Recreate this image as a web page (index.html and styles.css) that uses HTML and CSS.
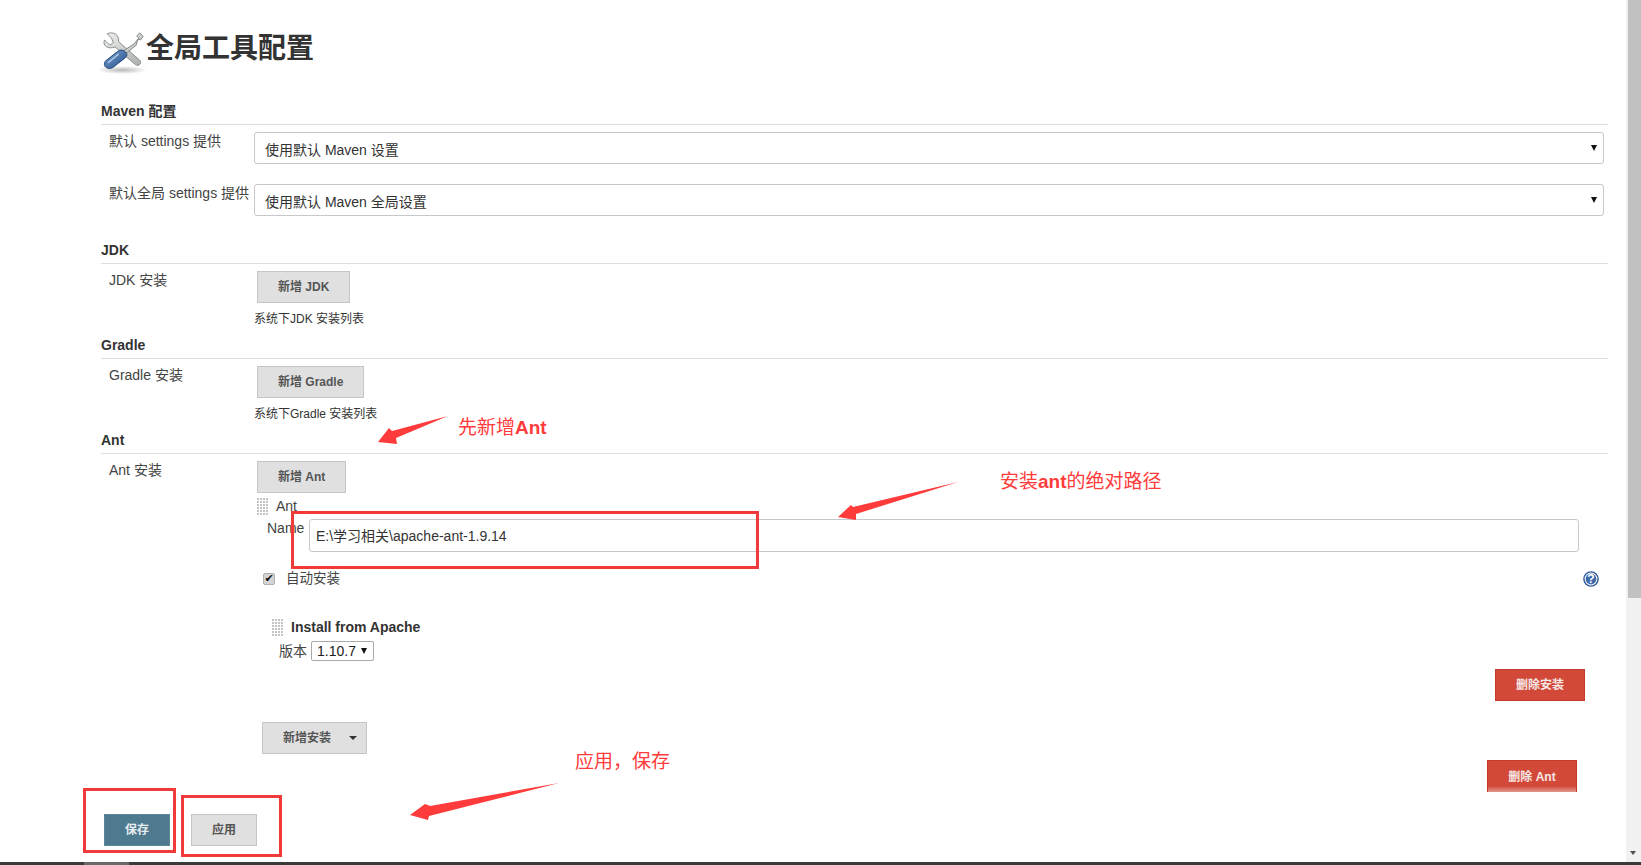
FILE: index.html
```html
<!DOCTYPE html>
<html lang="zh-CN">
<head>
<meta charset="utf-8">
<title>全局工具配置</title>
<link rel="stylesheet" href="styles.css">
</head>
<body>
<div class="page">
  <main class="main">
    <div class="title-row">
      <svg class="title-icon" viewBox="0 0 50 44" width="50" height="44" aria-hidden="true">
        <defs>
          <linearGradient id="steel" x1="0" y1="0" x2="1" y2="1"><stop offset="0" stop-color="#f2f3f1"/><stop offset="1" stop-color="#a9adab"/></linearGradient>
          <linearGradient id="blue" x1="0" y1="0" x2="1" y2="1"><stop offset="0" stop-color="#7ea6d3"/><stop offset="1" stop-color="#204a87"/></linearGradient>
          <radialGradient id="shadow"><stop offset="0" stop-color="#999" stop-opacity=".7"/><stop offset="1" stop-color="#999" stop-opacity="0"/></radialGradient>
        </defs>
        <ellipse cx="25" cy="40" rx="25" ry="4" fill="url(#shadow)"/>
        <g transform="translate(4 2) scale(.88)">
          <path d="M4 9 L10 15 L14 12 L12 7 L7 2 C14 -1 21 3 20 11 L44 32 C47 35 43 40 39 37 L16 17 C9 20 1 16 4 9 Z" fill="url(#steel)" stroke="#7d8280" stroke-width="1"/>
          <path d="M38 13 L43 7 L40.5 4.5 L44 1 L48 5 L45 9 L42 8 L40 15 L25 27 L22 24 Z" fill="#c9cdcb" stroke="#787d7b" stroke-width="1"/>
          <path d="M27 22 C30 24 30 27 28 29 L14 40 C8 44 1 39 5 33 L19 22 C21 20 25 20 27 22 Z" fill="url(#blue)" stroke="#1d3f72" stroke-width="1"/>
          <path d="M8 35 L20 25" stroke="#b8d0ec" stroke-width="1.6" fill="none"/>
        </g>
      </svg>
      <h1 class="title">全局工具配置</h1>
    </div>

    <section class="section section-maven">
      <h2 class="section-head">Maven 配置</h2>
      <div class="form-row">
        <label class="form-label">默认 settings 提供</label>
        <div class="form-control">
          <div class="select-wrap"><select class="select"><option>使用默认 Maven 设置</option></select></div>
        </div>
      </div>
      <div class="form-row">
        <label class="form-label">默认全局 settings 提供</label>
        <div class="form-control">
          <div class="select-wrap"><select class="select"><option>使用默认 Maven 全局设置</option></select></div>
        </div>
      </div>
    </section>

    <section class="section">
      <h2 class="section-head">JDK</h2>
      <div class="form-row">
        <label class="form-label">JDK 安装</label>
        <div class="form-control">
          <button class="btn btn-indent" type="button">新增 JDK</button>
          <div class="help-text">系统下JDK 安装列表</div>
        </div>
      </div>
    </section>

    <section class="section">
      <h2 class="section-head">Gradle</h2>
      <div class="form-row">
        <label class="form-label">Gradle 安装</label>
        <div class="form-control">
          <button class="btn btn-indent" type="button">新增 Gradle</button>
          <div class="help-text">系统下Gradle 安装列表</div>
        </div>
      </div>
    </section>

    <section class="section">
      <h2 class="section-head">Ant</h2>
      <div class="form-row">
        <label class="form-label">Ant 安装</label>
        <div class="form-control ant-control">
          <button class="btn btn-indent" type="button">新增 Ant</button>
          <div class="chunk-head"><span class="handle"></span><span>Ant</span></div>
          <div class="name-row">
            <label class="name-label">Name</label>
            <input class="text-input" type="text" value="E:\学习相关\apache-ant-1.9.14">
          </div>
          <div class="auto-row">
            <span class="check"><span class="check-mark">✔</span></span>
            <span class="auto-label">自动安装</span>
            <svg class="help-icon" viewBox="0 0 16 16" width="16" height="16" aria-hidden="true">
              <circle cx="8" cy="8" r="7.8" fill="#2f5a9a"/>
              <circle cx="8" cy="8" r="6.4" fill="#fff"/>
              <circle cx="8" cy="8" r="5.4" fill="#3d69a8"/>
              <text class="help-mark" x="8" y="12.4" text-anchor="middle">?</text>
            </svg>
          </div>
          <div class="install-head"><span class="handle"></span><strong>Install from Apache</strong></div>
          <div class="version-row">
            <span>版本</span>
            <div class="mini-wrap"><select class="mini-select"><option>1.10.7</option></select></div>
          </div>
          <button class="btn btn-danger btn-del-install" type="button">删除安装</button>
          <button class="btn btn-add-install" type="button">新增安装<span class="caret"></span></button>
          <button class="btn btn-danger btn-del-ant" type="button">删除 Ant</button>
        </div>
      </div>
    </section>

    <div class="save-bar">
      <button class="btn btn-primary" type="button">保存</button>
      <button class="btn" type="button">应用</button>
    </div>
  </main>

  <div class="scrollbar">
    <div class="scroll-thumb"></div>
    <div class="scroll-arrow"></div>
  </div>
  <div class="taskbar"><div class="task-item"></div></div>

  <svg class="arrows" viewBox="0 0 1641 865" width="1641" height="865" aria-hidden="true">
    <polygon points="448,416 392,431 389,428 378,442 397,444 396,438"/>
    <polygon points="958,482 853,507 851,505 838,517 856,520 856,514"/>
    <polygon points="559,783 430,806 425,804 410,815 428,820 429,816"/>
  </svg>
  <div class="note note-add">先新增<b>Ant</b></div>
  <div class="note note-path">安装<b>ant</b>的绝对路径</div>
  <div class="note note-apply">应用，保存</div>
  <div class="red-box box-name"></div>
  <div class="red-box box-save"></div>
  <div class="red-box box-apply"></div>
</div>
</body>
</html>
```
FILE: styles.css
```css
* { box-sizing: border-box; }

html, body {
  margin: 0;
  height: 100%;
  overflow: hidden;
  background: #fff;
}

body {
  font-family: "Liberation Sans", "Noto Sans CJK SC", sans-serif;
  font-size: 14px;
  line-height: 16px;
  color: #333;
}

.page {
  position: relative;
  display: grid;
  grid-template-columns: 1fr 15px;
  grid-template-rows: 1fr 3px;
  width: 1641px;
  height: 865px;
  overflow: hidden;
}

.main {
  padding: 28px 18px 0 101px;
  overflow: hidden;
}

/* Title */
.title-row {
  display: flex;
  height: 40px;
  margin-bottom: 35px;
  margin-left: -4px;
}

.title-icon {
  flex: none;
  margin-top: 2px;
  overflow: visible;
}

.title {
  margin: 1px 0 0 -1px;
  font-size: 28px;
  line-height: 40px;
  font-weight: 700;
  color: #333;
}

/* Sections */
.section { margin-top: 11px; }
.section:first-of-type { margin-top: 0; }
.section-maven { padding-bottom: 15px; }

.section-head {
  margin: 0;
  padding-bottom: 5px;
  font-size: 14px;
  line-height: 16px;
  font-weight: 700;
  color: #333;
  border-bottom: 1px solid #e0e0e0;
}

.form-row {
  display: grid;
  grid-template-columns: 153px 1fr;
  padding-top: 7px;
}

.form-row + .form-row { padding-top: 20px; }

.form-label {
  padding-left: 8px;
  margin-top: 1px;
  white-space: nowrap;
  color: #444;
}

.form-control {
  display: flex;
  flex-direction: column;
  align-items: flex-start;
  min-width: 0;
}

/* Selects */
.select-wrap {
  position: relative;
  width: calc(100% - 4px);
}

.select-wrap::after,
.mini-wrap::after {
  content: "";
  position: absolute;
  border-left: 3px solid transparent;
  border-right: 3px solid transparent;
  border-top: 6px solid #111;
  pointer-events: none;
}

.select-wrap::after { right: 7px; top: 13px; }
.mini-wrap::after { right: 7px; top: 7px; }

.select {
  display: block;
  width: 100%;
  height: 32px;
  padding: 3px 10px 0;
  appearance: none;
  background: #fff;
  border: 1px solid #c8c8c8;
  border-radius: 3px;
  font: 14px/26px "Liberation Sans", "Noto Sans CJK SC", sans-serif;
  color: #333;
}

.mini-wrap {
  position: relative;
  width: 63px;
}

.mini-select {
  display: block;
  width: 100%;
  height: 20px;
  padding: 0 0 0 5px;
  appearance: none;
  background: #fff;
  border: 1px solid #a9a9a9;
  border-radius: 2px;
  font: 14px/18px "Liberation Sans", "Noto Sans CJK SC", sans-serif;
  color: #222;
}

/* Buttons */
.btn {
  flex: none;
  height: 32px;
  padding: 0 20px;
  background: #e0e0e0;
  border: 1px solid #c6c6c6;
  border-radius: 0;
  font: 700 12px/30px "Liberation Sans", "Noto Sans CJK SC", sans-serif;
  color: #555;
  white-space: nowrap;
}

.btn-indent { margin-left: 3px; }

.btn-danger {
  background: #d24939;
  border-color: #c43d2d;
  color: #f6e8e6;
}

.btn-primary {
  background: #4d7a8f;
  border-color: #5d8799;
  color: #e6edf0;
}

.help-text {
  margin: 8px 0 -1px;
  font-size: 12px;
  line-height: 16px;
  color: #333;
}

/* Ant block */
.chunk-head {
  display: flex;
  gap: 8px;
  margin: 5px 0 0 3px;
  line-height: 17px;
  color: #444;
}

.handle {
  flex: none;
  display: block;
  width: 11px;
  height: 17px;
  background-image: radial-gradient(circle at 1px 1px, #c4c4c4 1px, transparent 1.2px);
  background-size: 3px 3px;
}

.name-row {
  display: flex;
  align-self: stretch;
  margin: 4px 29px 0 13px;
  color: #444;
}

.name-label {
  flex: none;
  width: 42px;
  margin-top: 1px;
}

.text-input {
  flex: 1;
  min-width: 0;
  height: 33px;
  padding: 0 6px 2px;
  background: #fff;
  border: 1px solid #c8c8c8;
  border-radius: 3px;
  font: 14px/29px "Liberation Sans", "Noto Sans CJK SC", sans-serif;
  color: #333;
}

.auto-row {
  display: flex;
  align-items: center;
  align-self: stretch;
  height: 16px;
  margin: 19px 9px 0 9px;
}

.check {
  flex: none;
  display: flex;
  align-items: center;
  justify-content: center;
  width: 12px;
  height: 12px;
  background: #d4d4d4;
  border: 1px solid #b0b0b0;
  border-radius: 2px;
}

.check-mark {
  font: 11px/10px "DejaVu Sans", sans-serif;
  color: #111;
}

.auto-label {
  margin-left: 11px;
  font-size: 13.5px;
  color: #444;
}

.help-icon { margin-left: auto; flex: none; }

.help-mark {
  font: 700 12px "Liberation Sans", sans-serif;
  fill: #fff;
}

.install-head {
  display: flex;
  gap: 8px;
  margin: 32px 0 0 18px;
  line-height: 17px;
}

.version-row {
  display: flex;
  align-items: center;
  gap: 4px;
  margin: 5px 0 0 25px;
  color: #444;
}

.btn-del-install {
  align-self: flex-end;
  width: 90px;
  padding: 0;
  margin: 8px 23px 0 0;
}

.btn-add-install {
  display: flex;
  align-items: center;
  justify-content: space-between;
  width: 105px;
  padding: 0 9px 0 20px;
  margin: 21px 0 0 8px;
}

.caret {
  width: 0;
  height: 0;
  border-left: 4px solid transparent;
  border-right: 4px solid transparent;
  border-top: 4px solid #333;
}

.btn-del-ant {
  align-self: flex-end;
  width: 90px;
  padding: 0;
  margin: 6px 31px 0 0;
  background: linear-gradient(#d24939 0, #d24939 25px, #e5a49b 32px);
  border-bottom: 0;
}

.save-bar {
  display: flex;
  gap: 21px;
  margin: 22px 0 0 3px;
}

/* Scrollbar and strip */
.scrollbar {
  position: relative;
  background: #f1f1f1;
}

.scroll-thumb {
  height: 598px;
  margin-left: 2px;
  background: #c1c1c1;
}

.scroll-arrow {
  position: absolute;
  right: 5px;
  bottom: 7px;
  border-left: 3.5px solid transparent;
  border-right: 3.5px solid transparent;
  border-top: 4px solid #505050;
}

.taskbar {
  grid-column: 1 / -1;
  background: #3a3a3a;
}

.task-item {
  width: 45px;
  height: 3px;
  margin-left: 84px;
  background: #6a6a6a;
}

/* Annotations */
.arrows {
  position: absolute;
  left: 0;
  top: 0;
  pointer-events: none;
}

.arrows polygon { fill: #ff3b3b; }

.note {
  position: absolute;
  font-family: "Noto Sans CJK SC", sans-serif;
  font-size: 19px;
  line-height: 24px;
  white-space: nowrap;
  color: #ff3b3b;
}

.note b { font-family: "Liberation Sans", sans-serif; font-weight: 700; }

.note-add { left: 458px; top: 414px; }
.note-path { left: 1000px; top: 468px; }
.note-apply { left: 575px; top: 748px; }

.red-box {
  position: absolute;
  border: 3px solid #f33a3a;
  pointer-events: none;
}

.box-name { left: 291px; top: 511px; width: 468px; height: 58px; }
.box-save { left: 83px; top: 788px; width: 93px; height: 65px; }
.box-apply { left: 181px; top: 795px; width: 101px; height: 62px; }
```
